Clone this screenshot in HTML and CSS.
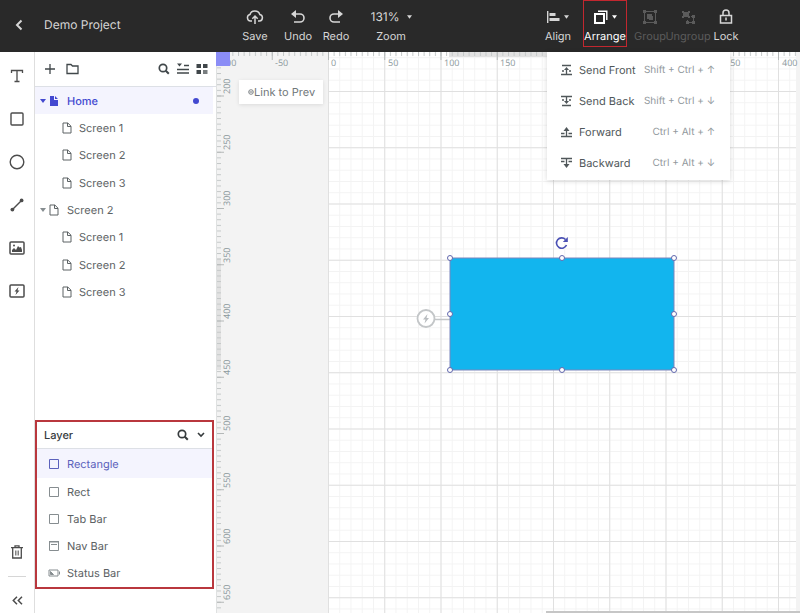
FILE: index.html
```html
<!DOCTYPE html>
<html lang="en">
<head>
<meta charset="utf-8">
<title>Demo Project</title>
<link rel="stylesheet" href="styles.css">
</head>
<body>
<svg class="defs" aria-hidden="true">
  <symbol id="page" viewBox="0 0 10 12"><path d="M1 1h4.800l3.200 3.200V11H1zM5.500 1v3.500H9" fill="none" stroke="currentColor"/></symbol>
  <symbol id="search" viewBox="0 0 12 12"><circle cx="5" cy="5" r="3.700" fill="none" stroke="currentColor" stroke-width="1.700"/><path d="M7.800 7.800l3 3" stroke="currentColor" stroke-width="2"/></symbol>
  <symbol id="box" viewBox="0 0 12 12"><path d="M1.500 1.500h9v9h-9z" fill="none" stroke="currentColor"/></symbol>
  <symbol id="caret" viewBox="0 0 6 4"><path d="M0 0h6L3 4z" fill="currentColor"/></symbol>
</svg>
<header class="topbar">
  <button class="back" aria-label="Back"><svg width="8" height="12" viewBox="0 0 8 12"><path d="M6.500 1.500L2 6l4.500 4.500" fill="none" stroke="currentColor" stroke-width="2"/></svg></button>
  <h1 class="title">Demo Project</h1>
  <div class="group history">
    <button class="tool save"><span class="glyph"><svg width="18" height="16" viewBox="0 0 18 16" fill="none" stroke="currentColor" stroke-width="1.500"><path d="M6 12H4.500A3.300 3.300 0 0 1 4 5.500C5 .8 12.500.6 13.800 5.500a3.300 3.300 0 0 1-.3 6.500H12M9 15V8M6.300 9.800L9 7l2.700 2.800"/></svg></span><span>Save</span></button>
    <button class="tool"><span class="glyph"><svg width="14" height="14" viewBox="0 0 14 14"><path d="M3 4h6a4 4 0 0 1 0 8H3" fill="none" stroke="currentColor" stroke-width="1.600"/><path d="M0 4L5 0v8z" fill="currentColor"/></svg></span><span>Undo</span></button>
    <button class="tool"><span class="glyph"><svg width="14" height="14" viewBox="0 0 14 14"><path d="M11 4H5a4 4 0 0 0 0 8h6" fill="none" stroke="currentColor" stroke-width="1.600"/><path d="M14 4L9 0v8z" fill="currentColor"/></svg></span><span>Redo</span></button>
    <div class="tool zoom"><span class="glyph"><select id="zoom"><option>131%</option></select><svg width="5" height="4"><use href="#caret"/></svg></span><label for="zoom">Zoom</label></div>
  </div>
  <div class="group actions">
    <button class="tool align"><span class="glyph"><svg width="13" height="14" viewBox="0 0 13 14" fill="currentColor"><path d="M0 1h1.400v12H0zM2.500 3h6v3h-6zM2.500 8h10v3h-10z"/></svg><svg width="5" height="4"><use href="#caret"/></svg></span><span>Align</span></button>
    <div class="arrange-wrap">
      <button class="tool arrange" aria-expanded="true"><span class="glyph"><svg width="14" height="14" viewBox="0 0 14 14" fill="none" stroke="currentColor"><path d="M1 4h9v9H1z" stroke-width="2"/><path d="M4 1.200h8.800V10" stroke-width="1.400"/></svg><svg width="5" height="4"><use href="#caret"/></svg></span><span>Arrange</span></button>
      <div class="menu">
        <button class="item"><svg width="11" height="12" viewBox="0 0 11 12" fill="none" stroke="currentColor" stroke-width="1.300"><path d="M1 1.500h9M0 10.500h11M5.500 10V5M1 7h2M8 7h2"/><path d="M5.500 3L8 6H3z" fill="currentColor" stroke="none"/></svg><span>Send Front</span><kbd>Shift + Ctrl + ↑</kbd></button>
        <button class="item"><svg width="11" height="12" viewBox="0 0 11 12" fill="none" stroke="currentColor" stroke-width="1.300"><path d="M0 1.500h11M1 10.500h9M5.500 2v5M1 5h2M8 5h2"/><path d="M5.500 9L3 6h5z" fill="currentColor" stroke="none"/></svg><span>Send Back</span><kbd>Shift + Ctrl + ↓</kbd></button>
        <button class="item"><svg width="11" height="12" viewBox="0 0 11 12" fill="none" stroke="currentColor" stroke-width="1.300"><path d="M0 10.500h11M0 7.500h3.500M7.500 7.500H11M5.500 10V4"/><path d="M5.500 1L8.500 5h-6z" fill="currentColor" stroke="none"/></svg><span>Forward</span><kbd>Ctrl + Alt + ↑</kbd></button>
        <button class="item"><svg width="11" height="12" viewBox="0 0 11 12" fill="none" stroke="currentColor" stroke-width="1.300"><path d="M0 1.500h11M0 4.500h3.500M7.500 4.500H11M5.500 2v6"/><path d="M5.500 11L2.500 7h6z" fill="currentColor" stroke="none"/></svg><span>Backward</span><kbd>Ctrl + Alt + ↓</kbd></button>
      </div>
    </div>
    <button class="tool" disabled><span class="glyph"><svg width="14" height="14" viewBox="0 0 14 14"><path d="M1.500 1.500h11v11h-11z" fill="none" stroke="currentColor"/><path d="M0 0h3v3H0zM11 0h3v3h-3zM0 11h3v3H0zM11 11h3v3h-3zM4 4h5v2h1v4H6V9H4z" fill="currentColor"/></svg></span><span>Group</span></button>
    <button class="tool" disabled><span class="glyph"><svg width="14" height="14" viewBox="0 0 14 14"><path d="M1 1h2v1h4V1h2v2H8v3h1v2H7V7H3v1H1V6h1V3H1z" fill="currentColor"/><path d="M10 6.500h2.500v6h-6V10" fill="none" stroke="currentColor"/><path d="M11 5h3v3h-3zM5 11h3v3H5zM11 11h3v3h-3z" fill="currentColor"/></svg></span><span>Ungroup</span></button>
    <button class="tool"><span class="glyph"><svg width="14" height="15" viewBox="0 0 14 15" fill="none" stroke="currentColor" stroke-width="1.500"><path d="M1.500 6.500h11V14h-11zM4 6V4a3 3 0 0 1 6 0v2M7 8.500v3"/></svg></span><span>Lock</span></button>
  </div>
</header>
<main class="workspace">
  <nav class="rail">
    <button aria-label="Text"><svg width="14" height="14" viewBox="0 0 14 14" fill="none" stroke="currentColor" stroke-width="1.300"><path d="M1.500 4V1.500h11V4M7 1.500v11M4.500 12.500h5"/></svg></button>
    <button aria-label="Rectangle"><svg width="14" height="14" viewBox="0 0 14 14" fill="none" stroke="currentColor" stroke-width="1.400"><rect x="1" y="1" width="12" height="12" rx="1"/></svg></button>
    <button aria-label="Circle"><svg width="16" height="16" viewBox="0 0 16 16" fill="none" stroke="currentColor" stroke-width="1.400"><circle cx="8" cy="8" r="6.800"/></svg></button>
    <button aria-label="Line"><svg width="14" height="14" viewBox="0 0 14 14" fill="currentColor"><path d="M2.500 11.500l9-9" stroke="currentColor" stroke-width="1.500"/><circle cx="2.400" cy="11.600" r="1.900"/><circle cx="11.600" cy="2.400" r="1.900"/></svg></button>
    <button aria-label="Image"><svg width="16" height="14" viewBox="0 0 16 14"><rect x="1" y="1" width="14" height="12" rx="1" fill="none" stroke="currentColor" stroke-width="1.500"/><path d="M3 11V9l2-2 2 2 2-4 1.500 1.500L12 6l1 3v2z" fill="currentColor"/><circle cx="5" cy="4.500" r="1" fill="currentColor"/></svg></button>
    <button aria-label="Interaction"><svg width="16" height="14" viewBox="0 0 16 14"><rect x="1" y="1" width="14" height="12" rx="1" fill="none" stroke="currentColor" stroke-width="1.500"/><path d="M9.500 3L5.500 7.500h2L6.500 11l4-4.500h-2z" fill="currentColor"/></svg></button>
    <div class="rail-end">
      <button aria-label="Delete"><svg width="12" height="14" viewBox="0 0 12 14" fill="none" stroke="currentColor" stroke-width="1.300"><path d="M0 2.700h12M4 2V.8h4V2M1.700 3v10h8.600V3"/><path d="M4.500 5.500v5M6 5.500v5M7.500 5.500v5" stroke-width=".7"/></svg></button>
      <hr>
      <button aria-label="Collapse"><svg width="11" height="9" viewBox="0 0 11 9" fill="none" stroke="currentColor" stroke-width="1.500"><path d="M5 .8L1.300 4.500 5 8.200M10 .8L6.300 4.500 10 8.200"/></svg></button>
    </div>
  </nav>
  <aside class="panel">
    <div class="panel-tools">
      <button aria-label="Add page"><svg width="12" height="12" viewBox="0 0 12 12"><path d="M6 1v10M1 6h10" stroke="currentColor" stroke-width="1.300"/></svg></button>
      <button aria-label="Add folder"><svg width="13" height="12" viewBox="0 0 13 12"><path d="M1 1.500h4L6.500 3H12v7.500H1z" fill="none" stroke="currentColor" stroke-width="1.300"/></svg></button>
      <span class="push"></span>
      <button aria-label="Search"><svg width="12" height="12"><use href="#search"/></svg></button>
      <button aria-label="Collapse all"><svg width="12" height="12" viewBox="0 0 12 12"><path d="M0 6.500h12M0 10h12M7 2.500h5" stroke="currentColor" stroke-width="1.700"/><path d="M0 .5h5l-2.500 3z" fill="currentColor"/></svg></button>
      <button aria-label="Grid view"><svg width="12" height="12" viewBox="0 0 12 12"><path d="M.5 1H5v4H.5zM7 1h4.500v4H7zM.5 7H5v4H.5z" fill="currentColor"/><path d="M7 7h4.500v4H7z" fill="currentColor" opacity=".7"/></svg></button>
    </div>
    <ul class="tree">
      <li class="current"><svg class="twist" width="6" height="4"><use href="#caret"/></svg><svg width="10" height="12" viewBox="0 0 10 12"><path d="M1 1h4v4h4v6H1zM6 1l3 3H6z" fill="currentColor"/></svg><a href="#home">Home</a><i class="dot"></i></li>
      <li class="child"><svg width="10" height="12"><use href="#page"/></svg><a href="#s1">Screen 1</a></li>
      <li class="child"><svg width="10" height="12"><use href="#page"/></svg><a href="#s2">Screen 2</a></li>
      <li class="child"><svg width="10" height="12"><use href="#page"/></svg><a href="#s3">Screen 3</a></li>
      <li><svg class="twist" width="6" height="4"><use href="#caret"/></svg><svg width="10" height="12"><use href="#page"/></svg><a href="#p2">Screen 2</a></li>
      <li class="child"><svg width="10" height="12"><use href="#page"/></svg><a href="#p2s1">Screen 1</a></li>
      <li class="child"><svg width="10" height="12"><use href="#page"/></svg><a href="#p2s2">Screen 2</a></li>
      <li class="child"><svg width="10" height="12"><use href="#page"/></svg><a href="#p2s3">Screen 3</a></li>
    </ul>
    <section class="layers">
      <div class="layers-head"><h2>Layer</h2><button aria-label="Search layers"><svg width="12" height="12"><use href="#search"/></svg></button><button aria-label="Collapse layers"><svg width="8" height="6" viewBox="0 0 8 6"><path d="M1 1l3 3 3-3" fill="none" stroke="currentColor" stroke-width="1.600"/></svg></button></div>
      <ul class="layer-list">
        <li class="selected"><svg width="12" height="12"><use href="#box"/></svg><span>Rectangle</span></li>
        <li><svg width="12" height="12"><use href="#box"/></svg><span>Rect</span></li>
        <li><svg width="12" height="12"><use href="#box"/></svg><span>Tab Bar</span></li>
        <li><svg width="12" height="12" viewBox="0 0 12 12"><path d="M1.500 1.500h9v9h-9zM3 4.500h6" fill="none" stroke="currentColor"/><path d="M1 1h10v1.500H1z" fill="currentColor"/></svg><span>Nav Bar</span></li>
        <li><svg width="12" height="12" viewBox="0 0 12 12"><path d="M1 3h9v6H1zM11.500 4.500v3" fill="none" stroke="currentColor"/><path d="M2.500 7.500v-3l3 3z" fill="currentColor" stroke="currentColor"/></svg><span>Status Bar</span></li>
      </ul>
    </section>
  </aside>
  <section class="canvas" aria-label="Canvas">
    <svg class="scene" width="100%" height="100%">
      <defs>
        <pattern id="minor" x="112" y="39" width="11.250" height="11.250" patternUnits="userSpaceOnUse"><path d="M0 .5h11.250M.5 0v11.250" stroke="#f3f3f3" fill="none"/></pattern>
        <pattern id="major" x="112" y="39" width="56.250" height="56.250" patternUnits="userSpaceOnUse"><path d="M0 .5h56.250M.5 0v56.250" stroke="#e0e0e0" fill="none"/></pattern>
        <pattern id="htick" x="112" width="5.625" height="4" patternUnits="userSpaceOnUse"><path d="M.5 0v4" stroke="#c4c8c8"/></pattern>
        <pattern id="hbig" x="112" width="56.250" height="8" patternUnits="userSpaceOnUse"><path d="M.5 0v8" stroke="#b4b8b8"/></pattern>
        <pattern id="vtick" y="43.500" width="5" height="5.625" patternUnits="userSpaceOnUse"><path d="M0 .5h5" stroke="#c4c8c8"/></pattern>
        <pattern id="vbig" y="43.500" width="8" height="56.250" patternUnits="userSpaceOnUse"><path d="M0 .5h8" stroke="#b4b8b8"/></pattern>
      </defs>
      <rect width="100%" height="100%" fill="#f3f3f3"/>
      <g class="board">
        <rect x="112" width="468" height="100%" fill="#fff"/>
        <rect x="112" width="468" height="100%" fill="url(#minor)"/>
        <rect x="112" width="468" height="100%" fill="url(#major)"/>
      </g>
      <rect x="233" width="225" height="5" fill="#e2e2e2"/>
      <rect y="206" width="5" height="112" fill="#e2e2e2"/>
      <rect width="100%" height="4" fill="url(#htick)"/>
      <rect width="100%" height="8" fill="url(#hbig)"/>
      <rect width="5" height="100%" fill="url(#vtick)"/>
      <rect width="8" height="100%" fill="url(#vbig)"/>
      <g class="ruler">
        <text x="2" y="14">-100</text><text x="59" y="14">-50</text><text x="115" y="14">0</text><text x="172" y="14">50</text><text x="228" y="14">100</text><text x="284" y="14">150</text><text x="509" y="14">350</text><text x="566" y="14">400</text>
        <text transform="translate(14 42) rotate(-90)">200</text><text transform="translate(14 98) rotate(-90)">250</text><text transform="translate(14 154) rotate(-90)">300</text><text transform="translate(14 211) rotate(-90)">350</text><text transform="translate(14 267) rotate(-90)">400</text><text transform="translate(14 323) rotate(-90)">450</text><text transform="translate(14 379) rotate(-90)">500</text><text transform="translate(14 436) rotate(-90)">550</text><text transform="translate(14 492) rotate(-90)">600</text><text transform="translate(14 548) rotate(-90)">650</text>
      </g>
      <rect width="14" height="14" fill="#8b8df6"/>
      <path d="M.5 14V2000" stroke="#dfe1e1"/>
      <path d="M219 267.500h15" stroke="#c3c6c8" stroke-width="1.500"/>
      <circle cx="210" cy="266.500" r="8.500" fill="#fff" stroke="#c3c6c8" stroke-width="1.800"/>
      <path d="M211.500 262l-4.500 5.500h2.500l-1 4 4.500-5.500h-2.500z" fill="#b9bdc0"/>
      <rect x="234" y="206" width="224" height="112" fill="#12b5ee" stroke="#7a86bd"/>
      <g fill="#fff" stroke="#6268ae"><circle cx="234" cy="206" r="2.500"/><circle cx="346" cy="206" r="2.500"/><circle cx="458" cy="206" r="2.500"/><circle cx="234" cy="262" r="2.500"/><circle cx="458" cy="262" r="2.500"/><circle cx="234" cy="318" r="2.500"/><circle cx="346" cy="318" r="2.500"/><circle cx="458" cy="318" r="2.500"/></g>
      <path d="M349.500 187.500a5.200 5.200 0 1 0 1 5.500" fill="none" stroke="#4a50b4" stroke-width="1.600"/>
      <path d="M351.800 185v5h-5z" fill="#4a50b4"/>
    </svg>
    <button class="link-card"><svg width="6" height="6" viewBox="0 0 6 6"><circle cx="3" cy="3" r="2.300" fill="none" stroke="currentColor" stroke-width=".9"/><path d="M1.500 3h3" stroke="currentColor"/></svg>Link to Prev</button>
    <div class="scrollbar"></div>
  </section>
</main>
</body>
</html>
```
FILE: styles.css
```css
* { box-sizing: border-box; }
body {
  margin: 0;
  min-height: 100vh;
  display: flex;
  flex-direction: column;
  font: 11px/16px Inter, "Liberation Sans", sans-serif;
  text-rendering: geometricPrecision;
  color: #5c6264;
  background: #fff;
}
button, select {
  font: inherit;
  color: inherit;
  background: none;
  border: 0;
  padding: 0;
  margin: 0;
  text-rendering: inherit;
}
svg { flex: none; }
ul { list-style: none; margin: 0; padding: 0; }
a { color: inherit; text-decoration: none; }
.defs { position: absolute; width: 0; height: 0; }

.topbar {
  display: flex;
  height: 52px;
  background: #292929;
  color: #d6d6d6;
}
.back { width: 38px; height: 50px; flex: none; }
.back svg { display: block; margin: auto; }
.title {
  width: 190px;
  margin: 0;
  padding-left: 6px;
  font-size: 12px;
  font-weight: 400;
  line-height: 50px;
}
.group { display: flex; }
.history { padding-left: 8px; }
.actions { margin-left: auto; padding-right: 55px; }
.tool {
  width: 38px;
  height: 47px;
  display: flex;
  flex-direction: column;
  align-items: center;
  padding-top: 8px;
  gap: 3px;
  white-space: nowrap;
}
.tool:disabled { color: #5b5b5b; }
.glyph { display: flex; align-items: center; justify-content: center; gap: 4px; height: 17px; }
.save { margin-right: 5px; }
.zoom { width: 46px; margin-left: 13px; }
.zoom select { appearance: none; font-size: 12px; width: 32px; }
.align { margin-right: 6px; }
.arrange-wrap { position: relative; margin-right: 4px; }
.arrange { width: 44px; color: #fff; outline: 1px solid #c2272f; outline-offset: -1px; }

.menu {
  position: absolute;
  z-index: 5;
  top: 52px;
  left: -36px;
  width: 183px;
  padding: 2px 0;
  background: #fff;
  color: #50575a;
  box-shadow: 0 1px 5px rgba(0, 0, 0, .16);
}
.item {
  display: flex;
  align-items: center;
  gap: 7px;
  width: 100%;
  height: 31px;
  padding: 0 15px 0 14px;
  white-space: nowrap;
}
.item kbd { margin-left: auto; font: inherit; font-size: 10px; color: #92999d; }

.workspace { flex: 1; display: flex; }
.rail {
  width: 35px;
  flex: none;
  display: flex;
  flex-direction: column;
  align-items: center;
  padding-top: 2px;
  border-right: 1px solid #dedede;
  color: #4c4c4c;
}
.rail button { display: flex; align-items: center; justify-content: center; width: 34px; height: 43px; }
.rail-end { margin-top: auto; display: flex; flex-direction: column; }
.rail-end button:first-child { height: 49px; }
.rail hr { width: 18px; margin: 0 auto; border: 0; border-top: 1px solid #d6d6d6; }
.rail-end button:last-child { height: 36px; padding-top: 11px; }

.panel { width: 181px; flex: none; display: flex; flex-direction: column; }
.panel-tools {
  display: flex;
  align-items: center;
  gap: 7px;
  height: 35px;
  padding: 0 8px 0 9px;
  border-bottom: 1px solid #dde0e6;
  color: #40474a;
}
.panel-tools button { display: flex; }
.panel-tools button:first-child { margin-right: 3px; }
.push { flex: 1; }
.tree { display: grid; grid-template-rows: 27px repeat(7, 1fr); height: 219px; }
.tree li { display: flex; align-items: center; padding-left: 5px; margin-right: 3px; }
.tree .child { padding-left: 27px; }
.tree a { margin-left: 8px; }
.tree .child a { margin-left: 7px; }
.twist { margin-right: 3px; color: #868d90; }
.current, .current .twist { color: #4349d0; }
.current { background: #f4f4fe; font-weight: 500; }
.dot { width: 6px; height: 6px; margin: 0 14px 0 auto; border-radius: 50%; background: #4349d0; }

.layers { margin: auto 2px 24px 0; border: 2px solid #b9373d; }
.layers-head {
  display: flex;
  align-items: center;
  gap: 8px;
  height: 27px;
  padding: 0 7px;
  border-bottom: 1px solid #dde0e6;
  color: #363b3d;
}
.layers-head h2 { flex: 1; margin: 0; font-size: 11px; font-weight: 500; }
.layers-head button { display: flex; }
.layer-list { display: grid; grid-template-rows: 29px repeat(4, 1fr); height: 138px; }
.layer-list li { display: flex; align-items: center; gap: 7px; padding-left: 11px; }
.layer-list svg { color: #868d90; }
.layer-list .selected, .layer-list .selected svg { color: #5c62bc; }
.selected { background: #f4f4fe; }

.canvas { position: relative; flex: 1; min-width: 0; overflow: hidden; }
.scene { position: absolute; inset: 0; }
.ruler text { font: 9px "Open Sans", sans-serif; fill: #8a979b; }
.link-card {
  position: absolute;
  left: 23px;
  top: 28px;
  display: flex;
  align-items: center;
  height: 24px;
  padding: 0 8px 0 9px;
  background: #fff;
  color: #71777a;
  box-shadow: 0 1px 4px rgba(0, 0, 0, .1);
}
.scrollbar {
  position: absolute;
  left: 330px;
  right: 0;
  bottom: 0;
  height: 2px;
  background: #c6c6c6;
}
```
